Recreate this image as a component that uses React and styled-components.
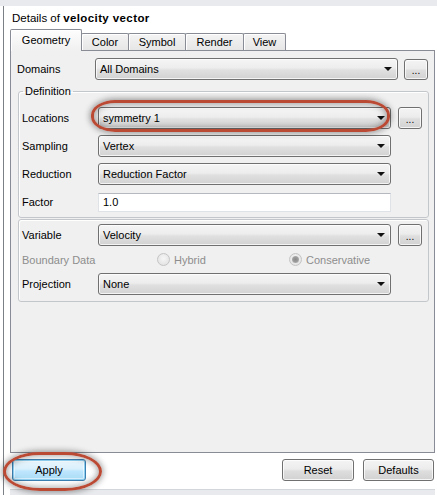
import styled, { createGlobalStyle } from 'styled-components';

const GlobalStyle = createGlobalStyle`
  body {
    margin: 0;
    background: #fff;
    font-family: 'Liberation Sans', Arial, sans-serif;
    font-size: 11px;
    color: #000;
  }
  * { box-sizing: border-box; }
`;

const Frame = styled.div`
  width: 437px;
  height: 495px;
  display: flex;
  flex-direction: column;
  background: #fff;
  overflow: hidden;
`;

const Strip = styled.div`
  flex: none;
  height: 6px;
  background: #e8eaed;
  border-top: ${p => (p.$bottom ? '1px solid #d3d6da' : 'none')};
`;

const Window = styled.div`
  flex: 1;
  display: flex;
  flex-direction: column;
  margin-left: 3px;
  border-left: 1px solid #7c8086;
  padding: 0 2px 0 6px;
`;

const Title = styled.div`
  height: 24px;
  line-height: 24px;
  padding-left: 2px;
  font-size: 11.5px;

  b {
    font-weight: 700;
    letter-spacing: 0.4px;
  }
`;

const TabRow = styled.div`
  height: 20px;
  display: flex;
  align-items: flex-end;
`;

const Tab = styled.div`
  position: relative;
  z-index: ${p => (p.$active ? 2 : 1)};
  width: ${p => p.$width}px;
  height: ${p => (p.$active ? 22 : 17)}px;
  margin-left: ${p => (p.$first ? 0 : -1)}px;
  margin-bottom: ${p => (p.$active ? -1 : 0)}px;
  padding-bottom: ${p => (p.$active ? 2 : 0)}px;
  display: flex;
  align-items: center;
  justify-content: center;
  border: 1px solid #898c95;
  border-bottom: none;
  border-radius: 2px 2px 0 0;
  background: ${p =>
    p.$active
      ? 'linear-gradient(#fdfdfd, #f0f0f0)'
      : 'linear-gradient(#f4f4f4, #e6e6e6)'};
  box-shadow: inset 1px 1px 0 #fff;
`;

const Panel = styled.div`
  height: 403px;
  border: 1px solid #898c95;
  background: #f0f0f0;
  padding: 7px 6px;
  display: flex;
  flex-direction: column;
`;

const Row = styled.div`
  display: flex;
  align-items: center;
  height: ${p => p.$h || 22}px;
`;

const Label = styled.div`
  flex: none;
  width: ${p => p.$w}px;
  color: ${p => (p.$disabled ? '#8d8d8d' : '#000')};
  white-space: nowrap;
`;

const Cell = styled.div`
  position: relative;
  flex: 1;
  height: 100%;
  display: flex;
  align-items: center;
`;

const Select = styled.div`
  position: relative;
  width: 100%;
  height: 22px;
  padding-left: 4px;
  display: flex;
  align-items: center;
  border: 1px solid #707070;
  border-radius: 3px;
  background: linear-gradient(#f5f5f5 0%, #ededed 45%, #e0e0e0 55%, #d2d2d2 100%);
  box-shadow: inset 0 0 0 1px rgba(255, 255, 255, 0.75);

  &::after {
    content: '';
    position: absolute;
    right: 5px;
    top: 8px;
    border-left: 4px solid transparent;
    border-right: 4px solid transparent;
    border-top: 4px solid #111;
  }
`;

const TextInput = styled.div`
  width: 100%;
  height: 19px;
  padding-left: 4px;
  display: flex;
  align-items: center;
  background: #fff;
  border: 1px solid #dfe3e8;
  border-top-color: #b5b8be;
`;

const MoreButton = styled.div`
  flex: none;
  width: 24px;
  height: ${p => p.$h || 22}px;
  margin-left: ${p => p.$gap}px;
  display: flex;
  align-items: center;
  justify-content: center;
  padding-top: 2px;
  font-size: 10px;
  border: 1px solid #707070;
  border-radius: 3px;
  background: linear-gradient(#f4f4f4 0%, #ececec 45%, #dedede 55%, #d2d2d2 100%);
  box-shadow: inset 0 0 0 1px rgba(255, 255, 255, 0.75);
`;

const Spacer = styled.div`
  flex: none;
  width: 31px;
`;

const Group = styled.fieldset`
  margin: ${p => p.$top}px -1px 0 1px;
  padding: ${p => p.$pad};
  border: 1px solid #c3c7cb;
  border-radius: 3px;
  box-shadow: inset 1px 1px 0 #fff;
  min-width: 0;
  display: flex;
  flex-direction: column;
  gap: ${p => p.$gap}px;

  legend {
    margin-left: 1px;
    padding: 0 2px;
    line-height: 13px;
  }
`;

const RadioSet = styled.div`
  display: grid;
  grid-template-columns: 132px auto;
  padding-left: 59px;
  color: #8d8d8d;
`;

const RadioItem = styled.div`
  display: flex;
  align-items: center;
  gap: 4px;
`;

const Radio = styled.span`
  position: relative;
  width: 13px;
  height: 13px;
  border-radius: 50%;
  border: 1px solid #c4c4c4;
  background: radial-gradient(circle at 50% 40%, #f6f6f6, #dedede);

  &::after {
    content: '';
    display: ${p => (p.$checked ? 'block' : 'none')};
    position: absolute;
    left: 2px;
    top: 2px;
    width: 7px;
    height: 7px;
    border-radius: 50%;
    background: radial-gradient(circle, #8a8a8a 0%, #9c9c9c 50%, #c8c8c8 100%);
  }
`;

const Footer = styled.div`
  height: 36px;
  display: flex;
  align-items: flex-start;
  padding: 6px 1px 0 2px;
`;

const ButtonWrap = styled.div`
  position: relative;
  margin-right: ${p => (p.$push ? 'auto' : '0')};
  margin-left: ${p => p.$ml || 0}px;
`;

const Button = styled.div`
  width: ${p => p.$w}px;
  height: 22px;
  display: flex;
  align-items: center;
  justify-content: center;
  border-radius: 3px;
  border: 1px solid ${p => (p.$focus ? '#3c7fb1' : '#707070')};
  background: ${p =>
    p.$focus
      ? 'linear-gradient(#eaf6fd 0%, #d9f0fc 45%, #bee6fd 55%, #a9dbf6 100%)'
      : 'linear-gradient(#f4f4f4 0%, #ececec 45%, #dedede 55%, #d1d1d1 100%)'};
  box-shadow: ${p =>
    p.$focus
      ? 'inset 0 0 0 1px #8fd0f1, inset 0 0 0 2px rgba(255,255,255,0.5)'
      : 'inset 0 0 0 1px rgba(255,255,255,0.75)'};
`;

// hand-drawn red callout ring laid over a control
const Ring = styled.div`
  position: absolute;
  top: ${p => p.$t}px;
  right: ${p => p.$r}px;
  bottom: ${p => p.$b}px;
  left: ${p => p.$l}px;
  border: 3px solid #bb4a35;
  border-radius: ${p => p.$rad};
  box-shadow: 0 0 6px 1px rgba(0, 0, 0, 0.4), inset 0 0 6px 1px rgba(0, 0, 0, 0.35);
  pointer-events: none;
  z-index: 3;
`;

const tabs = [
  { label: 'Geometry', width: 72, active: true },
  { label: 'Color', width: 48 },
  { label: 'Symbol', width: 58 },
  { label: 'Render', width: 59 },
  { label: 'View', width: 43 },
];

const App = () => {
  return (
    <Frame>
      <GlobalStyle />
      <Strip />
      <Window>
        <Title>
          Details of <b>velocity vector</b>
        </Title>
        <TabRow>
          {tabs.map((t, i) => (
            <Tab key={t.label} $width={t.width} $active={t.active} $first={i === 0}>
              {t.label}
            </Tab>
          ))}
        </TabRow>
        <Panel>
          <Row>
            <Label $w={78}>Domains</Label>
            <Cell>
              <Select>All Domains</Select>
            </Cell>
            <MoreButton $gap={6} $h={21}>...</MoreButton>
          </Row>

          <Group $top={5} $pad="9px 6px 4px 3px" $gap={6}>
            <legend>Definition</legend>
            <Row>
              <Label $w={76}>Locations</Label>
              <Cell>
                <Select>symmetry 1</Select>
                <Ring $t={-7} $r={1} $b={-3} $l={-7} $rad="24px / 15px" />
              </Cell>
              <MoreButton $gap={7}>...</MoreButton>
            </Row>
            <Row>
              <Label $w={76}>Sampling</Label>
              <Cell>
                <Select>Vertex</Select>
              </Cell>
              <Spacer />
            </Row>
            <Row>
              <Label $w={76}>Reduction</Label>
              <Cell>
                <Select>Reduction Factor</Select>
              </Cell>
              <Spacer />
            </Row>
            <Row>
              <Label $w={76}>Factor</Label>
              <Cell>
                <TextInput>1.0</TextInput>
              </Cell>
              <Spacer />
            </Row>
          </Group>

          <Group $top={1} $pad="4px 6px 6px 3px" $gap={5}>
            <Row>
              <Label $w={76}>Variable</Label>
              <Cell>
                <Select>Velocity</Select>
              </Cell>
              <MoreButton $gap={7}>...</MoreButton>
            </Row>
            <Row $h={17}>
              <Label $w={76} $disabled>Boundary Data</Label>
              <RadioSet>
                <RadioItem>
                  <Radio />
                  Hybrid
                </RadioItem>
                <RadioItem>
                  <Radio $checked />
                  Conservative
                </RadioItem>
              </RadioSet>
            </Row>
            <Row>
              <Label $w={76}>Projection</Label>
              <Cell>
                <Select>None</Select>
              </Cell>
              <Spacer />
            </Row>
          </Group>
        </Panel>
        <Footer>
          <ButtonWrap $push>
            <Button $w={74} $focus>Apply</Button>
            <Ring $t={-7} $r={-16} $b={-10} $l={-9} $rad="38px / 20px" />
          </ButtonWrap>
          <ButtonWrap>
            <Button $w={72}>Reset</Button>
          </ButtonWrap>
          <ButtonWrap $ml={9}>
            <Button $w={71}>Defaults</Button>
          </ButtonWrap>
        </Footer>
        <Strip $bottom />
      </Window>
    </Frame>
  );
};

export default App;
